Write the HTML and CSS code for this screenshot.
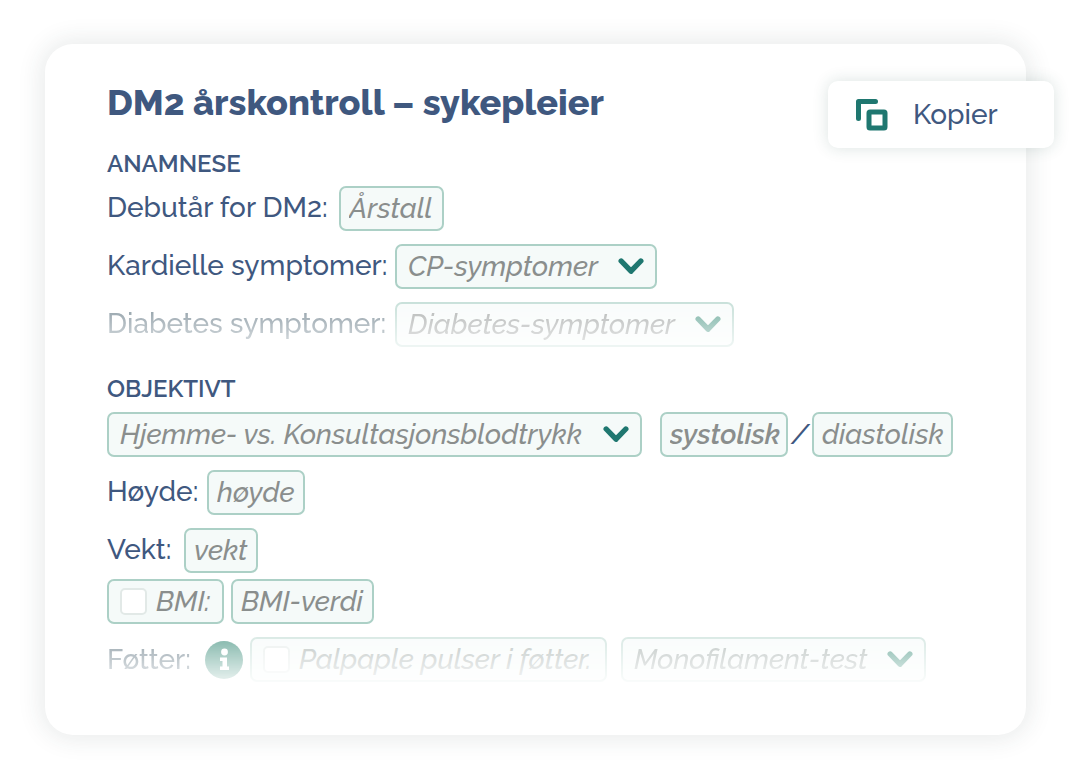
FILE: index.html
```html
<!DOCTYPE html>
<html lang="no">
<head>
<meta charset="utf-8">
<meta name="viewport" content="width=device-width, initial-scale=1">
<title>DM2 årskontroll – sykepleier</title>
<link rel="stylesheet" href="styles.css">
</head>
<body>
<svg class="symbols">
  <symbol id="chevron" viewBox="0 0 26 17"><path d="M3.200 3 13 13.200 22.800 3" fill="none" stroke="currentColor" stroke-width="5.4" stroke-linecap="round" stroke-linejoin="round"/></symbol>
</svg>
<main class="card">
  <button class="copy" type="button">
    <svg class="copy-icon" viewBox="0 0 32 32" aria-hidden="true">
      <path d="M2.5 19.5V2.500H19.500" fill="none" stroke="currentColor" stroke-width="5" stroke-linecap="round" stroke-linejoin="round"/>
      <rect x="13" y="13" width="16" height="16" rx="1" fill="none" stroke="currentColor" stroke-width="5"/>
    </svg>
    Kopier
  </button>

  <h1 class="title">DM2 årskontroll – sykepleier</h1>

  <section class="section">
    <h2 class="heading">ANAMNESE</h2>
    <div class="row">
      <label class="label label-debut" for="debut">Debutår for DM2:</label>
      <input class="field w-year" id="debut" type="text" placeholder="Årstall">
    </div>
    <div class="row">
      <label class="label label-symptoms" for="cp">Kardielle symptomer:</label>
      <span class="picker w-cp"><select class="field" id="cp"><option>CP-symptomer</option></select><svg class="chevron" aria-hidden="true"><use href="#chevron"/></svg></span>
    </div>
    <div class="row fade">
      <label class="label label-symptoms" for="diabetes">Diabetes symptomer:</label>
      <span class="picker w-diabetes"><select class="field" id="diabetes"><option>Diabetes-symptomer</option></select><svg class="chevron" aria-hidden="true"><use href="#chevron"/></svg></span>
    </div>
  </section>

  <section class="section">
    <h2 class="heading">OBJEKTIVT</h2>
    <div class="row">
      <span class="picker w-pressure"><select class="field" aria-label="Blodtrykk"><option>Hjemme- vs. Konsultasjonsblodtrykk</option></select><svg class="chevron" aria-hidden="true"><use href="#chevron"/></svg></span>
      <span class="pair">
        <input class="field w-systolic strong" type="text" aria-label="Systolisk" placeholder="systolisk">
        <span class="slash">/</span>
        <input class="field w-diastolic" type="text" aria-label="Diastolisk" placeholder="diastolisk">
      </span>
    </div>
    <div class="row">
      <label class="label label-height" for="height">Høyde:</label>
      <input class="field w-height" id="height" type="text" placeholder="høyde">
    </div>
    <div class="row">
      <label class="label label-weight" for="weight">Vekt:</label>
      <input class="field w-weight" id="weight" type="text" placeholder="vekt">
    </div>
    <div class="row row-tight">
      <label class="field check w-bmi"><input class="box" type="checkbox">BMI:</label>
      <input class="field w-bmi-value" type="text" aria-label="BMI-verdi" placeholder="BMI-verdi">
    </div>
    <div class="row fade fade-more">
      <span class="label label-feet">Føtter:</span>
      <svg class="info" viewBox="0 0 38 38" role="img" aria-label="Informasjon">
        <circle cx="19" cy="19" r="19" fill="currentColor"/>
        <circle cx="19.500" cy="11" r="3.400" fill="#fff"/>
        <path d="M15 16.500h7v9h2v3.500h-9v-3.500h2.500v-5.500H15z" fill="#fff"/>
      </svg>
      <label class="field check w-pulse"><input class="box" type="checkbox">Palpaple pulser i føtter.</label>
      <span class="picker w-filament"><select class="field" aria-label="Monofilament"><option>Monofilament-test</option></select><svg class="chevron" aria-hidden="true"><use href="#chevron"/></svg></span>
    </div>
  </section>
</main>
</body>
</html>
```
FILE: styles.css
```css
* { box-sizing: border-box; }

body {
  margin: 0;
  padding: 44px 54px 44px 45px;
  background: #fff;
  color: #3f587f;
  font-family: Raleway, Lato, "Open Sans", sans-serif;
  font-size: 28px;
  font-weight: 500;
  line-height: 36px;
}

.symbols { display: none; }

.card {
  position: relative;
  padding: 37px 62px 53px;
  border-radius: 28px;
  background: #fff;
  box-shadow: 0 0 24px 4px rgba(40, 60, 55, 0.1);
}

.copy {
  position: absolute;
  top: 37px;
  right: -28px;
  display: flex;
  align-items: center;
  gap: 25px;
  width: 226px;
  height: 67px;
  padding: 0 28px;
  border: 0;
  border-radius: 10px;
  background: #fff;
  box-shadow: 0 0 16px rgba(30, 80, 70, 0.16);
  color: inherit;
  font: inherit;
}

.copy-icon { width: 32px; height: 32px; color: #1f7770; }

.title {
  margin: 0 0 25px;
  font-size: 36px;
  font-weight: 800;
  line-height: 42px;
}

.section { margin-bottom: 26px; }
.section:last-child { margin-bottom: 0; }

.heading {
  margin: 0 0 6px;
  font-size: 24px;
  font-weight: 600;
  line-height: 32px;
}

.row {
  display: flex;
  align-items: center;
  min-height: 45px;
  margin-top: 13px;
  white-space: nowrap;
}

.heading + .row { margin-top: 0; }
.section + .section .heading { margin-bottom: 7px; }
.row-tight { gap: 7px; margin-top: 6px; }

.label { flex: none; padding-bottom: 2px; }
.label-debut { width: 232px; }
.label-symptoms { width: 288px; }
.label-height { width: 100px; }
.label-weight { width: 77px; }
.label-feet { width: 98px; padding-bottom: 0; }

.field {
  height: 45px;
  margin: 0;
  padding: 0 2px 0 8px;
  border: 2px solid #acd0c6;
  border-radius: 7px;
  background: #f5faf9;
  color: #8a8e8d;
  font: inherit;
  font-style: italic;
}

.field::placeholder { color: inherit; opacity: 1; }

.picker { position: relative; display: block; }

.picker .field {
  width: 100%;
  padding: 0 48px 0 11px;
  appearance: none;
}

.chevron {
  position: absolute;
  top: 14px;
  right: 13px;
  width: 26px;
  height: 17px;
  color: #1f7770;
  pointer-events: none;
}

.pair {
  display: flex;
  align-items: center;
  margin-left: 18px;
}

.slash {
  width: 24px;
  font-style: italic;
  text-align: center;
}

.field.strong { font-weight: 600; }

.check {
  display: flex;
  align-items: center;
  gap: 9px;
  padding: 0 11px;
}

.box {
  flex: none;
  width: 27px;
  height: 27px;
  margin: 0;
  border: 2px solid #e2e9e7;
  border-radius: 5px;
  background: #fff;
  appearance: none;
}

.info {
  flex: none;
  width: 38px;
  height: 38px;
  margin-right: 7px;
}

.w-year { width: 105px; }
.w-cp { width: 262px; }
.w-diabetes { width: 339px; }
.w-pressure { width: 535px; }
.w-systolic { width: 128px; }
.w-diastolic { width: 141px; }
.w-height { width: 98px; }
.w-weight { width: 74px; }
.w-bmi { width: 117px; }
.w-bmi-value { width: 143px; }
.w-pulse { width: 357px; }
.w-filament { width: 305px; margin-left: 14px; }

.fade { mask-image: linear-gradient(rgba(0, 0, 0, 0.65), rgba(0, 0, 0, 0.2)); }
.fade .label { color: #4d6472; }
.fade .chevron,
.info { color: #2f8672; }
.fade-more { mask-image: linear-gradient(rgba(0, 0, 0, 0.6) 0%, rgba(0, 0, 0, 0.35) 50%, rgba(0, 0, 0, 0.1)); }
.fade-more .field { border-color: #c3dcd5; color: #9aa5a2; }
```
